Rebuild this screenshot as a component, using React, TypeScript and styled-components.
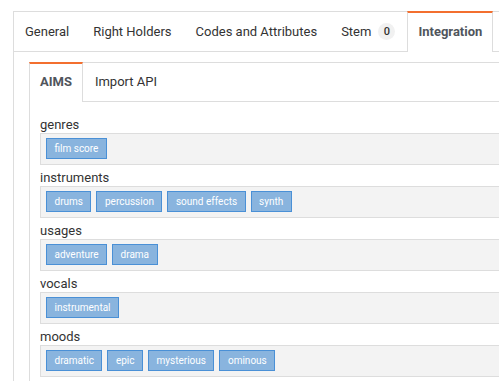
import React from "react";
import styled, { createGlobalStyle, css } from "styled-components";

const GlobalStyle = createGlobalStyle`
  *, *::before, *::after { box-sizing: border-box; }
  html, body { margin: 0; padding: 0; background: #ffffff; overflow: hidden; }
  body { font-family: Roboto, "Liberation Sans", Arial, sans-serif; color: #333333; }
`;

const Page = styled.div`
  padding: 11px 0 0 13px;
`;

const Card = styled.div`
  width: 560px;
  min-height: 400px;
  border-top: 1px solid #dddddd;
  border-left: 1px solid #dddddd;
`;

const TabBar = styled.div`
  display: flex;
  align-items: flex-start;
  margin: -1px 0 0 -1px;
  border-bottom: 1px solid #dddddd;
`;

const Tab = styled.div<{ $active?: boolean; $h: number }>`
  display: flex;
  align-items: center;
  height: ${(p) => p.$h}px;
  padding: 0 11px 2px;
  border: 1px solid transparent;
  border-top: 2px solid transparent;
  border-bottom: none;
  font-size: 13px;
  color: #333333;
  white-space: nowrap;
  cursor: pointer;
  ${(p) =>
    p.$active &&
    css`
      height: ${p.$h + 1}px;
      margin-bottom: -1px;
      padding: 0 10px 3px;
      background: #ffffff;
      border-color: #dddddd;
      border-top-color: #f36f2f;
      font-weight: 700;
      color: #50555c;
    `}
`;

const Badge = styled.span`
  display: inline-flex;
  align-items: center;
  justify-content: center;
  width: 17px;
  height: 17px;
  margin-left: 7px;
  border-radius: 50%;
  background: #f1f1f1;
  font-size: 11px;
  font-weight: 500;
  color: #333333;
`;

const Panel = styled.div`
  padding: 10px 0 0 15px;
`;

const InnerCard = styled.div`
  border-top: 1px solid #dddddd;
  border-left: 1px solid #dddddd;
  min-height: 340px;
`;

const Content = styled.div`
  padding: 10px 10px 0 10px;
`;

const Group = styled.section``;

const Label = styled.div`
  margin-top: 5px;
  font-size: 13px;
  line-height: 16px;
  color: #333333;
`;

const TagBox = styled.div`
  display: flex;
  flex-wrap: wrap;
  gap: 5px;
  padding: 4px 5px 5px;
  border: 1px solid #dddddd;
  background: #f3f3f3;
`;

const Tag = styled.span`
  display: inline-block;
  height: 21px;
  padding: 0 7.5px;
  border: 1px solid #4a90d6;
  background: #89b4de;
  color: #ffffff;
  font-size: 10px;
  line-height: 19px;
  white-space: nowrap;
`;

const groups: { label: string; tags: string[] }[] = [
  { label: "genres", tags: ["film score"] },
  { label: "instruments", tags: ["drums", "percussion", "sound effects", "synth"] },
  { label: "usages", tags: ["adventure", "drama"] },
  { label: "vocals", tags: ["instrumental"] },
  { label: "moods", tags: ["dramatic", "epic", "mysterious", "ominous"] },
];

export default function App() {
  return (
    <>
      <GlobalStyle />
      <Page>
        <Card>
          <TabBar>
            <Tab $h={40}>General</Tab>
            <Tab $h={40}>Right Holders</Tab>
            <Tab $h={40}>Codes and Attributes</Tab>
            <Tab $h={40}>
              Stem<Badge>0</Badge>
            </Tab>
            <Tab $h={40} $active>
              Integration
            </Tab>
          </TabBar>
          <Panel>
            <InnerCard>
              <TabBar>
                <Tab $h={39} $active>
                  AIMS
                </Tab>
                <Tab $h={39}>Import API</Tab>
              </TabBar>
              <Content>
                {groups.map((g) => (
                  <Group key={g.label}>
                    <Label>{g.label}</Label>
                    <TagBox>
                      {g.tags.map((t) => (
                        <Tag key={t}>{t}</Tag>
                      ))}
                    </TagBox>
                  </Group>
                ))}
              </Content>
            </InnerCard>
          </Panel>
        </Card>
      </Page>
    </>
  );
}
